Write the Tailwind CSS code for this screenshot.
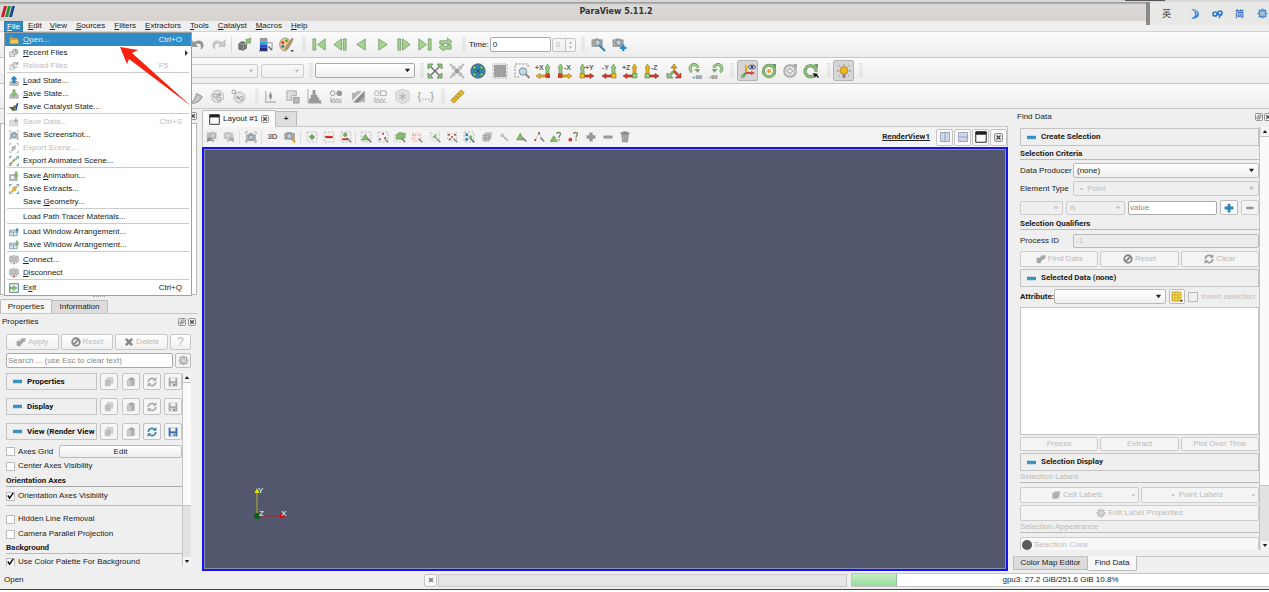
<!DOCTYPE html>
<html lang="en">

<head>
  <meta charset="UTF-8">
  <meta name="viewport" content="width=device-width, initial-scale=1.0">
  <title>ParaView 5.11.2</title>
  <script src="https://cdn.jsdelivr.net/npm/@tailwindcss/browser@4"></script>
</head>

<body class="bg-[#efefef] font-['Liberation_Sans',Arial,sans-serif] text-[8px] leading-[10px] text-[#222]">
  <!-- icon sprite -->
  <svg class="hidden" aria-hidden="true">
    <symbol id="undo" viewBox="0 0 16 16"><path d="M1 3v7h7L6 8c3-3 7-1 6 5 5-6 0-12-8-7z" fill="#999" stroke="#777" stroke-width=".6"/></symbol>
    <symbol id="redo" viewBox="0 0 16 16"><path d="M15 3v7H8l2-2C7 5 3 7 4 13-1 7 4 1 12 6z" fill="#ccc" stroke="#aaa" stroke-width=".6"/></symbol>
    <symbol id="extract" viewBox="0 0 16 16"><path d="M2 7l3-2 5 1v6l-3 2-5-1z" fill="#777" stroke="#666"/><path d="M2 7l5 1v6M7 8l3-2" stroke="#aaa" fill="none" stroke-width=".7"/><path d="M7 7l4-3-2-1 6-2-1 6-2-1-3 3z" fill="#93c47d" stroke="#5b8a4a" stroke-width=".6"/></symbol>
    <symbol id="cmap" viewBox="0 0 16 16"><path d="M2 1h8v4H2z" fill="#999"/><path d="M2 5h8v3H2z" fill="#2aa9d8"/><path d="M2 8h8v3H2z" fill="#2a50c8"/><path d="M2 11h8v4H2z" fill="#252a80"/><path d="M10 6h5v7M1 15h10" stroke="#666" fill="none" stroke-dasharray="1.5 1"/><path d="M11 10l4 4" stroke="#555" stroke-width="1.500"/></symbol>
    <symbol id="palette" viewBox="0 0 16 16"><path d="M7 1C2 1 0 6 1 10c1 4 5 6 7 4 1-2-1-3 1-5 3 0 4-2 3-4-1-2-3-4-5-4z" fill="#efc68c" stroke="#777" stroke-width=".7"/><circle cx="4" cy="6" r="1.500" fill="#d33"/><circle cx="8" cy="4" r="1.400" fill="#3a3"/><circle cx="4" cy="10" r="1.500" fill="#27b"/><path d="M14 1L8 10l-1 4 3-2 5-9z" fill="#b8a070" stroke="#665" stroke-width=".6"/><path d="M12 14h4l-2 2z" fill="#222"/></symbol>
    <symbol id="first" viewBox="0 0 16 16"><path d="M1 2h3v12H1zM14 2v12L6 8z" fill="#a3d58f" stroke="#6c8f60" stroke-width=".8"/></symbol>
    <symbol id="prev" viewBox="0 0 16 16"><path d="M9 2v12L1 8zM11 2h3v12h-3z" fill="#a3d58f" stroke="#6c8f60" stroke-width=".8"/></symbol>
    <symbol id="back" viewBox="0 0 16 16"><path d="M12 2v12L3 8z" fill="#a3d58f" stroke="#6c8f60" stroke-width=".8"/></symbol>
    <symbol id="play" viewBox="0 0 16 16"><path d="M4 2v12l9-6z" fill="#a3d58f" stroke="#6c8f60" stroke-width=".8"/></symbol>
    <symbol id="next" viewBox="0 0 16 16"><path d="M7 2v12l8-6zM2 2h3v12H2z" fill="#a3d58f" stroke="#6c8f60" stroke-width=".8"/></symbol>
    <symbol id="last" viewBox="0 0 16 16"><path d="M12 2h3v12h-3zM2 2v12l8-6z" fill="#a3d58f" stroke="#6c8f60" stroke-width=".8"/></symbol>
    <symbol id="loop" viewBox="0 0 16 16"><path d="M2 8V4h8V1l5 4-5 4V7H5v1zM14 8v5H6v2l-5-4 5-3v2h5V8z" fill="#a3d58f" stroke="#6c8f60" stroke-width=".7"/></symbol>
    <symbol id="camlink" viewBox="0 0 16 16"><path d="M1 3h2l1-1h4l1 1h3v7H1z" fill="#aaa" stroke="#888" stroke-width=".7"/><circle cx="7" cy="6" r="3" fill="#b5d2ea" stroke="#777"/><path d="M9 9l6 6" stroke="#2b87c0" stroke-width="2.200"/></symbol>
    <symbol id="camplus" viewBox="0 0 16 16"><path d="M1 3h2l1-1h4l1 1h3v7H1z" fill="#aaa" stroke="#888" stroke-width=".7"/><circle cx="7" cy="6" r="3" fill="#b5d2ea" stroke="#777"/><path d="M12 8v7M8.500 11.500h7" stroke="#2b87c0" stroke-width="2.400"/></symbol>
    <symbol id="camfind" viewBox="0 0 16 16"><path d="M1 3h2l1-1h6l1 1h3v8H1z" fill="#aaa" stroke="#888" stroke-width=".7"/><circle cx="7" cy="7" r="3.500" fill="#b5d2ea" stroke="#777"/><path d="M10 10l5 5" stroke="#c99a2a" stroke-width="2.400"/></symbol>
    <symbol id="resetcam" viewBox="0 0 16 16"><path d="M3 3l10 10M13 3L3 13" stroke="#666" stroke-width="1.300"/><path d="M1 1h5L1 6zM15 1h-5l5 5zM1 15h5l-5-5zM15 15h-5l5-5z" fill="#93cf7d" stroke="#4b7540" stroke-width=".7"/></symbol>
    <symbol id="resetdata" viewBox="0 0 16 16"><path d="M1 1l4 4M15 1l-4 4M1 15l4-4M15 15l-4-4" stroke="#bbb" stroke-width="2"/><path d="M6 3v3H3zM10 3v3h3zM6 13v-3H3zM10 13v-3h3z" fill="#ccc" stroke="#aaa" stroke-width=".7"/><circle cx="8" cy="8" r="2.500" fill="#999"/></symbol>
    <symbol id="globe" viewBox="0 0 16 16"><circle cx="8" cy="8" r="7.200" fill="#2d89bd" stroke="#555" stroke-width=".8"/><path d="M4 4l8 8M12 4l-8 8" stroke="#444"/><g fill="#93cf7d" stroke="#365" stroke-width=".8"><circle cx="4.500" cy="4.500" r="1.700"/><circle cx="11.500" cy="4.500" r="1.700"/><circle cx="4.500" cy="11.500" r="1.700"/><circle cx="11.500" cy="11.500" r="1.700"/></g></symbol>
    <symbol id="greybox" viewBox="0 0 16 16"><path d="M2 2h12v12H2z" fill="#a0a0a0"/><path d="M1 1h14v14H1z" fill="none" stroke="#aaa" stroke-dasharray="2 1.5"/></symbol>
    <symbol id="zoombox" viewBox="0 0 16 16"><path d="M14 4V1H1v13h4" fill="none" stroke="#888" stroke-dasharray="2 1.5"/><circle cx="9" cy="8.500" r="3.700" fill="#b9dcf2" stroke="#888"/><path d="M11.500 11l4 4" stroke="#888" stroke-width="2"/></symbol>
    <symbol id="iso" viewBox="0 0 16 16"><path d="M8 9V4" stroke="#d9a520" stroke-width="2"/><path d="M5 5l3-4 3 4z" fill="#e6b018" stroke="#75601c" stroke-width=".6"/><path d="M8 8l-4 4" stroke="#7db56b" stroke-width="3"/><path d="M8 8l4 4" stroke="#c9503f" stroke-width="3"/><path d="M1 10v5h6z" fill="#93cf7d" stroke="#557d4a" stroke-width=".7"/><path d="M15 10v5H9z" fill="#d54535" stroke="#773322" stroke-width=".5"/></symbol>
    <symbol id="rotp" viewBox="0 0 16 16"><path d="M5 9A4 4 0 1 1 11 5" fill="none" stroke="#6b8f60" stroke-width="3"/><path d="M5 9A4 4 0 1 1 11 5" fill="none" stroke="#a3d58f" stroke-width="1.600"/><path d="M7 6h6l-2 4z" fill="#79a96a"/><text x="5" y="16" font-size="6" font-weight="bold" fill="#777">+90</text></symbol>
    <symbol id="rotm" viewBox="0 0 16 16"><path d="M11 9A4 4 0 1 0 5 5" fill="none" stroke="#6b8f60" stroke-width="3"/><path d="M11 9A4 4 0 1 0 5 5" fill="none" stroke="#a3d58f" stroke-width="1.600"/><path d="M9 6H3l2 4z" fill="#79a96a"/><text x="0" y="16" font-size="6" font-weight="bold" fill="#777">-90</text></symbol>
    <symbol id="showaxes" viewBox="0 0 16 16"><path d="M6 11V4" stroke="#d9a520" stroke-width="2"/><path d="M4 5l2-4 2 4z" fill="#e6b018"/><path d="M6 10h6" stroke="#d54535" stroke-width="2"/><path d="M11 8l4 2-4 2z" fill="#d54535"/><path d="M6 10l-3 3" stroke="#6a9a5a" stroke-width="2.500"/><path d="M1 11v4h4z" fill="#7db56b"/><ellipse cx="12" cy="4" rx="3.500" ry="2" fill="#dde" stroke="#556"/><circle cx="12" cy="4" r="1.300" fill="#336"/></symbol>
    <symbol id="center" viewBox="0 0 16 16"><circle cx="8" cy="8" r="5.700" fill="none" stroke="#557d4a" stroke-width="3"/><circle cx="8" cy="8" r="5.700" fill="none" stroke="#93c47d" stroke-width="1.900"/><circle cx="8" cy="8" r="2" fill="#eba41c"/><path d="M11 1h4v5z" fill="#6b985c"/></symbol>
    <symbol id="centeroff" viewBox="0 0 16 16"><circle cx="8" cy="8" r="5.700" fill="none" stroke="#b4b4b4" stroke-width="2.500"/><path d="M8 5l3 3-3 3-3-3z" fill="none" stroke="#b4b4b4" stroke-width="1.500"/><path d="M11 1h4v5z" fill="#aaa"/></symbol>
    <symbol id="pick" viewBox="0 0 16 16"><path d="M11 12.500A5.500 5.500 0 1 1 13 9" fill="none" stroke="#557d4a" stroke-width="3"/><path d="M11 12.500A5.500 5.500 0 1 1 13 9" fill="none" stroke="#93c47d" stroke-width="1.800"/><path d="M11 1h4v5z" fill="#6b985c"/><path d="M10 10l5 1-1 1 2 2-1 1-2-2-1 2z" fill="#111"/></symbol>
    <symbol id="bulb" viewBox="0 0 16 16"><circle cx="8" cy="7.500" r="4" fill="#efb520" stroke="#977418" stroke-width=".6"/><path d="M6.500 11h3v4h-3z" fill="#888"/><path d="M8 1v1.500M2.500 2l1.500 1.500M13.500 2L12 3.500M1 8h2M13 8h2M3 13l1-1M13 13l-1-1" stroke="#888"/></symbol>
    <symbol id="tube" viewBox="0 0 16 16"><path d="M1 14c4 0 5-3 7-9l6 3c-2 5-6 8-13 7z" fill="#c4c4c4" stroke="#888"/></symbol>
    <symbol id="glyphs" viewBox="0 0 16 16"><circle cx="8" cy="8" r="6.500" fill="#e4e4e4" stroke="#b4b4b4"/><circle cx="5.500" cy="7" r="2" fill="none" stroke="#999"/><circle cx="10" cy="6" r="1.800" fill="#aaa"/><circle cx="9.500" cy="10.500" r="2" fill="none" stroke="#999"/></symbol>
    <symbol id="glyphs2" viewBox="0 0 16 16"><circle cx="9" cy="9" r="5.800" fill="#e4e4e4" stroke="#b4b4b4"/><circle cx="3" cy="3" r="2" fill="none" stroke="#999"/><circle cx="7" cy="9" r="1.600" fill="#aaa"/><circle cx="11" cy="10" r="2" fill="none" stroke="#999"/></symbol>
    <symbol id="plotpt" viewBox="0 0 16 16"><path d="M3 2v12h11M8 12V3" fill="none" stroke="#aaa" stroke-width="1.200"/><ellipse cx="8" cy="7.500" rx="1.800" ry="3" fill="#999"/></symbol>
    <symbol id="plotsel" viewBox="0 0 16 16"><path d="M2 2h10v5H7v5H2z" fill="#ddd" stroke="#aaa"/><path d="M9 9h6v6H9z" fill="#bbb" stroke="#999"/></symbol>
    <symbol id="hist" viewBox="0 0 16 16"><path d="M1 0v15h15" fill="none" stroke="#aaa"/><path d="M2 10h2v5H2zM4 6h2v9H4zM6 1h3v14H6zM9 6h2v9H9zM11 9h2v6h-2zM13 12h2v3h-2z" fill="#999"/></symbol>
    <symbol id="plottime" viewBox="0 0 16 16"><circle cx="4" cy="4.500" r="2.500" fill="none" stroke="#999"/><circle cx="11" cy="4.500" r="3" fill="#999"/><path d="M2 9v5h12M3 13l2-3 2 3 2-3 2 3 2-3" fill="none" stroke="#999"/></symbol>
    <symbol id="slice" viewBox="0 0 16 16"><path d="M1 4h4l1-2h9v12H1z" fill="#b4b4b4"/><path d="M0 15L14 1" stroke="#eee" stroke-width="2"/><path d="M3 14L14 3v5l-7 7z" fill="#8c8c8c"/></symbol>
    <symbol id="plottime2" viewBox="0 0 16 16"><circle cx="4" cy="4.500" r="2.500" fill="none" stroke="#aaa"/><path d="M8 2h6v5H8zM2 9v5h12M3 13l2-3 2 3 2-3 2 3 2-3" fill="none" stroke="#aaa"/></symbol>
    <symbol id="cubestar" viewBox="0 0 16 16"><path d="M8 0l7 3v9l-7 4-7-4V3z" fill="#e0e0e0" stroke="#ccc"/><path d="M8 4v8M4.500 6l7 4M11.500 6l-7 4" stroke="#aaa"/></symbol>
    <symbol id="ruler" viewBox="0 0 16 16"><path d="M1 12L12 1l3 3L4 15z" fill="#f0b914" stroke="#8a702a" stroke-width=".8"/><path d="M4 10l1.500 1.500M6.500 7.500L8 9M9 5l1.500 1.500" stroke="#886655"/></symbol>
    <symbol id="camgrey" viewBox="0 0 16 16"><path d="M1 2h13v9H1z" fill="#c0c0c0"/><circle cx="9" cy="6" r="4" fill="#ccc" stroke="#999"/><path d="M1 15l1-6 6 0-2 2c3 0 5 1 5 4-2-2-4-2-6-2z" fill="#8c8c8c"/></symbol>
    <symbol id="camgrey2" viewBox="0 0 16 16"><path d="M1 2h13v9H1z" fill="#ccc"/><circle cx="7" cy="6" r="4" fill="#d4d4d4" stroke="#aaa"/><path d="M15 15l-1-6-6 0 2 2c-3 0-5 1-5 4 2-2 4-2 6-2z" fill="#aaa"/></symbol>
    <symbol id="shot" viewBox="0 0 16 16"><path d="M1 4V1h3M12 1h3v3M1 12v3h3M12 15h3v-3" fill="none" stroke="#999"/><path d="M2 5h3l1-2h4l1 2h3v8H2z" fill="#b4b4b4" stroke="#888" stroke-width=".6"/><circle cx="8" cy="8.500" r="3.200" fill="#b5d2ea" stroke="#777"/></symbol>
    <symbol id="selbox" viewBox="0 0 16 16"><path d="M1.500 1.500h13v13h-13z" fill="none" stroke="#aaa" stroke-dasharray="3 2"/></symbol>
    <symbol id="selplus" viewBox="0 0 16 16"><use href="#selbox"/><path d="M8 4.500v7M4.500 8h7" stroke="#6fa85d" stroke-width="3.500"/></symbol>
    <symbol id="selminus" viewBox="0 0 16 16"><use href="#selbox"/><path d="M3 8h10" stroke="#d22b20" stroke-width="3"/></symbol>
    <symbol id="seltog" viewBox="0 0 16 16"><use href="#selbox"/><path d="M7 2v6M4 5h6" stroke="#6fa85d" stroke-width="2.500"/><path d="M3 11h8" stroke="#d22b20" stroke-width="2.500"/><path d="M9 9l6 6" stroke="#777" stroke-width="1.500"/></symbol>
    <symbol id="seltri" viewBox="0 0 16 16"><use href="#selbox"/><path d="M7 4l5 8H2z" fill="#82bd6c" stroke="#557d4a" stroke-width=".6"/><path d="M10 10l5 5" stroke="#777" stroke-width="1.800"/></symbol>
    <symbol id="selpts" viewBox="0 0 16 16"><use href="#selbox"/><g fill="#c0392b"><circle cx="8" cy="4" r="1.300"/><circle cx="4" cy="11" r="1.300"/><circle cx="11" cy="9" r="1.300"/></g><path d="M10 10l5 5" stroke="#888" stroke-width="1.800"/></symbol>
    <symbol id="selblock" viewBox="0 0 16 16"><path d="M3 5l4-3 8 1v6l-4 2H3z" fill="#82bd6c" stroke="#557d4a" stroke-width=".6"/><path d="M1 4v10h9" fill="none" stroke="#aaa" stroke-dasharray="2 2"/><path d="M10 10l5 5" stroke="#777" stroke-width="1.800"/></symbol>
    <symbol id="selfrus" viewBox="0 0 16 16"><path d="M2 4l8-2 3 3v7L5 14l-3-3zM5 5v9M2 4l3 2 8-1" fill="none" stroke="#dd7c70" stroke-dasharray="2 2"/><path d="M10 10l5 5" stroke="#888" stroke-width="1.800"/></symbol>
    <symbol id="selpoly" viewBox="0 0 16 16"><path d="M2 2l6 3 6-3v10l-6 2-6-3z" fill="none" stroke="#aaa" stroke-dasharray="2 2"/><path d="M4 8l6-4v7z" fill="#82bd6c"/><path d="M10 10l5 5" stroke="#888" stroke-width="1.800"/></symbol>
    <symbol id="selpolypts" viewBox="0 0 16 16"><path d="M2 2l6 2 6-2v10l-6 2-6-3z" fill="none" stroke="#aaa" stroke-dasharray="2 2"/><g fill="#c0594b"><circle cx="4" cy="5" r="1.500"/><circle cx="8" cy="8" r="1.500"/><circle cx="12" cy="5" r="1.500"/><circle cx="5" cy="11" r="1.500"/></g><path d="M10 10l5 5" stroke="#888" stroke-width="1.800"/></symbol>
    <symbol id="selinter" viewBox="0 0 16 16"><use href="#selbox"/><circle cx="5" cy="5" r="2" fill="#2b87c0"/><circle cx="5" cy="11" r="2" fill="#2b87c0"/><circle cx="10" cy="8" r="2.500" fill="#82bd6c"/><path d="M10 10l5 5" stroke="#666" stroke-width="2"/></symbol>
    <symbol id="greycube" viewBox="0 0 16 16"><path d="M2 6l4-4h8v8l-4 4H2z" fill="#bbb"/><path d="M2 6h8v8M10 6l4-4M6 6v8M2 10h8l4-4" fill="none" stroke="#999" stroke-width=".8"/></symbol>
    <symbol id="hoverpt" viewBox="0 0 16 16"><circle cx="6" cy="6" r="2" fill="#ccc" stroke="#aaa"/><path d="M8 8l5 5" stroke="#aaa" stroke-width="1.800"/></symbol>
    <symbol id="hovertri" viewBox="0 0 16 16"><path d="M7 3l5 9H2z" fill="#82bd6c" stroke="#557d4a" stroke-width=".6"/><path d="M10 9l5 5" stroke="#777" stroke-width="1.800"/></symbol>
    <symbol id="hoverpts" viewBox="0 0 16 16"><path d="M8 3L3 12M8 3l4 8" stroke="#999" stroke-dasharray="2 1"/><g fill="#c0392b"><circle cx="8" cy="3" r="1.500"/><circle cx="3" cy="12" r="1.500"/></g><path d="M10 9l5 5" stroke="#777" stroke-width="1.800"/></symbol>
    <symbol id="asktri" viewBox="0 0 16 16"><path d="M5 6l5 8H0z" fill="#82bd6c" stroke="#557d4a" stroke-width=".6"/><path d="M9 4c0-3 5-3 5 0 0 2-2 2-2 5M12 10.500v2" fill="none" stroke="#6b7b55" stroke-width="1.600"/></symbol>
    <symbol id="askpt" viewBox="0 0 16 16"><circle cx="4.500" cy="11.500" r="2.600" fill="#c8402f"/><path d="M9 4c0-3 5-3 5 0 0 2-2 2-2 5M12 10.500v2" fill="none" stroke="#6b7b55" stroke-width="1.600"/></symbol>
    <symbol id="gplus" viewBox="0 0 16 16"><path d="M8 2v12M2 8h12" stroke="#999" stroke-width="4.500"/></symbol>
    <symbol id="gminus" viewBox="0 0 16 16"><path d="M2 8h12" stroke="#999" stroke-width="4"/></symbol>
    <symbol id="bplus" viewBox="0 0 16 16"><path d="M8 1v14M1 8h14" stroke="#2b87b8" stroke-width="4.500"/></symbol>
    <symbol id="trash" viewBox="0 0 16 16"><path d="M2 3h12M5 1.500h6" stroke="#888" stroke-width="2"/><path d="M3 4h10l-1 11H4z" fill="#999"/><path d="M6 6v7M8 6v7M10 6v7" stroke="#bbb" stroke-width=".8"/></symbol>
    <symbol id="folder" viewBox="0 0 16 16"><path d="M1 3h5l1 2h7v9H1z" fill="#d79a2a"/><path d="M3 7h12v7H1z" fill="#f3c75a" stroke="#b98729" stroke-width=".6"/></symbol>
    <symbol id="recent" viewBox="0 0 16 16"><path d="M1 6h8v8H1z" fill="#ddd" stroke="#999"/><circle cx="10" cy="6" r="4.500" fill="#cfd8c8" stroke="#888"/><path d="M10 3v3l3 1" fill="none" stroke="#668a55" stroke-width="1.200"/></symbol>
    <symbol id="reload" viewBox="0 0 16 16"><path d="M1 6h8v8H1z" fill="#e4e4e4" stroke="#bbb"/><path d="M13 9a4 4 0 1 1 0-5M14 1v4h-4" fill="none" stroke="#aaa" stroke-width="1.800"/></symbol>
    <symbol id="load" viewBox="0 0 16 16"><path d="M1 10l2-2h10l2 2v5H1z" fill="#bbb" stroke="#999" stroke-width=".6"/><path d="M8 0l5 5h-3v6H6V5H3z" fill="#2b87c0" stroke="#25638b" stroke-width=".5"/></symbol>
    <symbol id="save" viewBox="0 0 16 16"><path d="M1 10l2-2h10l2 2v5H1z" fill="#bbb" stroke="#999" stroke-width=".6"/><path d="M8 12l5-5h-3V1H6v6H3z" fill="#86bf70" stroke="#557d4a" stroke-width=".5"/></symbol>
    <symbol id="catalyst" viewBox="0 0 16 16"><path d="M0 8h7v7z" fill="#555"/><path d="M7 6h3L8 14H6z" fill="#d02a2a"/><path d="M9 5h3l-2 9H8z" fill="#3a9a3a"/><path d="M12 2h3l-3 12h-2z" fill="#2450a0"/></symbol>
    <symbol id="savedata" viewBox="0 0 16 16"><path d="M1 5h13v9H1z" fill="#ddd" stroke="#bbb"/><path d="M11 1v6M8 5l3 3 3-3" fill="none" stroke="#aaa" stroke-width="2"/></symbol>
    <symbol id="export" viewBox="0 0 16 16"><path d="M1 4V1h3M12 1h3v3M1 12v3h3M12 15h3v-3" fill="none" stroke="#bbb" stroke-width="1.500"/><path d="M3 13l2-5-2-1 8-4-1 8-2-1-2 3z" fill="#b0b0b0"/></symbol>
    <symbol id="exportanim" viewBox="0 0 16 16"><path d="M1 4V1h3M12 1h3v3M1 12v3h3M12 15h3v-3" fill="none" stroke="#2b87a0" stroke-width="1.500"/><path d="M2 13l3-3M6 9l4-4M11 5l2-2" stroke="#7a9c50" stroke-width="3"/><path d="M2 13L13 3" stroke="#c7d06a" stroke-dasharray="2 2"/></symbol>
    <symbol id="saveanim" viewBox="0 0 16 16"><path d="M1 6h12v9H1z" fill="#bbb" stroke="#888"/><path d="M3 8h5v5H3z" fill="#eee"/><path d="M10 1h3v5h2l-3.500 4L8 6h2z" fill="#86bf70" stroke="#777" stroke-width=".5"/></symbol>
    <symbol id="saveext" viewBox="0 0 16 16"><path d="M1 4V1h3M12 1h3v3M1 12v3h3M12 15h3v-3" fill="none" stroke="#2b87c0" stroke-width="1.500"/><path d="M3 12l4-4-2-2 8-3-3 8-2-1-3 4z" fill="#eeb51f" stroke="#a57b1c" stroke-width=".6"/></symbol>
    <symbol id="loadwin" viewBox="0 0 16 16"><path d="M1 5h12v9H1zM1 8h12M7 8v6" fill="#dbe9ee" stroke="#4f7f90"/><path d="M13 1l3 4h-2v4h-2V5h-2z" fill="#2b87c0"/></symbol>
    <symbol id="savewin" viewBox="0 0 16 16"><path d="M1 5h12v9H1zM1 8h12M7 8v6" fill="#dbe9ee" stroke="#4f7f90"/><path d="M13 9l3-4h-2V1h-2v4h-2z" fill="#86bf70" stroke="#557d4a" stroke-width=".5"/></symbol>
    <symbol id="connect" viewBox="0 0 16 16"><path d="M1 3c0-2 4-2 4 0v7c0 2-4 2-4 0zM6 2c0-2 4-2 4 0v8c0 2-4 2-4 0zM11 3c0-2 4-2 4 0v7c0 2-4 2-4 0z" fill="#ccc" stroke="#999"/><path d="M3 13h10" stroke="#999"/><circle cx="8" cy="13.500" r="1.700" fill="#86bf70"/></symbol>
    <symbol id="disconnect" viewBox="0 0 16 16"><path d="M1 3c0-2 4-2 4 0v7c0 2-4 2-4 0zM6 2c0-2 4-2 4 0v8c0 2-4 2-4 0zM11 3c0-2 4-2 4 0v7c0 2-4 2-4 0z" fill="#ccc" stroke="#999"/><path d="M3 13h10" stroke="#999"/><circle cx="8" cy="13.500" r="1.700" fill="#d44"/></symbol>
    <symbol id="exit" viewBox="0 0 16 16"><path d="M1 6V1h14v14H1v-5" fill="#e8f0f0" stroke="#557f90" stroke-width="1.500"/><path d="M0 6.500h7V4l6 4-6 4V9.500H0z" fill="#86bf70" stroke="#557d4a" stroke-width=".5"/></symbol>
    <symbol id="apply" viewBox="0 0 16 16"><path d="M1 6h8v4l-2 5-6-1z" fill="#a4a4a4"/><circle cx="9" cy="5" r="2.500" fill="#b4b4b4"/><path d="M7 8l4-4-2-2h6v6l-2-1-4 4z" fill="#a4a4a4"/></symbol>
    <symbol id="noentry" viewBox="0 0 16 16"><circle cx="8" cy="8" r="6" fill="none" stroke="#888" stroke-width="3"/><path d="M4 12l8-8" stroke="#888" stroke-width="3"/></symbol>
    <symbol id="cross" viewBox="0 0 16 16"><path d="M3 3l10 10M13 3L3 13" stroke="#888" stroke-width="4.500"/></symbol>
    <symbol id="gear" viewBox="0 0 16 16"><path d="M8 1v14M1 8h14M3 3l10 10M13 3L3 13" stroke="currentColor" stroke-width="3"/><circle cx="8" cy="8" r="5.500" fill="currentColor"/><circle cx="8" cy="8" r="4" fill="#eee"/><circle cx="8" cy="8" r="2.500" fill="none" stroke="currentColor" stroke-width="1.500"/></symbol>
    <symbol id="copy" viewBox="0 0 16 16"><path d="M5 1h9v9H5z" fill="#d4d4d4" stroke="#bbb"/><path d="M2 5h8v9H2z" fill="#ccc" stroke="#aaa"/><path d="M4 8h4M4 11h4" stroke="#999"/></symbol>
    <symbol id="paste" viewBox="0 0 16 16"><path d="M4 2h10v12H4z" fill="#b0b0b0"/><path d="M7 1h4v2H7z" fill="#888"/><path d="M2 5h7v9H2z" fill="#ccc" stroke="#aaa"/></symbol>
    <symbol id="refresh" viewBox="0 0 16 16"><path d="M2 8a6 6 0 0 1 11-3M14 8a6 6 0 0 1-11 3" fill="none" stroke="currentColor" stroke-width="2.600"/><path d="M9 6h6V0zM7 10H1v6z" fill="currentColor"/></symbol>
    <symbol id="disk" viewBox="0 0 16 16"><path d="M1 1h14v14H1z" fill="currentColor"/><path d="M4 1h8v6H4z" fill="#eee"/><path d="M4 10h8v5H4z" fill="#ddd"/><path d="M9 11h2v3H9z" fill="#555"/></symbol>
    <symbol id="dash" viewBox="0 0 16 16"><path d="M0 5h16v6H0z" fill="#2e8bc0"/><path d="M1 9h14" stroke="#74b3da"/></symbol>
    <symbol id="down" viewBox="0 0 8 8"><path d="M1 2h6L4 6z" fill="currentColor"/></symbol>
    <symbol id="up" viewBox="0 0 8 8"><path d="M1 6h6L4 2z" fill="currentColor"/></symbol>
    <symbol id="float" viewBox="0 0 16 16"><rect x="1" y="1" width="14" height="14" rx="2" fill="#eee" stroke="#777" stroke-width="1.500"/><path d="M4 8h5v4H4zM7 8V4h5v5H9" fill="none" stroke="#666" stroke-width="1.300"/></symbol>
    <symbol id="close" viewBox="0 0 16 16"><rect x="1" y="1" width="14" height="14" rx="2" fill="#eee" stroke="#777" stroke-width="1.500"/><path d="M4.500 4.500l7 7M11.500 4.500l-7 7" stroke="#444" stroke-width="2.200"/></symbol>
    <symbol id="win" viewBox="0 0 16 16"><path d="M1 1h14v14H1z" fill="#fafafa" stroke="#222" stroke-width="1.300"/><path d="M1 1h14v4H1z" fill="#222"/></symbol>
    <symbol id="grip" viewBox="0 0 4 16"><path d="M1 0v16M3 0v16" stroke="#c4c4c4" stroke-dasharray="1 1"/></symbol>
    <symbol id="check" viewBox="0 0 10 10"><path d="M2 5l2 3 4-6" fill="none" stroke="#111" stroke-width="1.600"/></symbol>
  </svg>

  <div class="flex h-screen flex-col overflow-hidden">
    <!-- title bar -->
    <header class="relative flex h-[21px] shrink-0 items-center border-t-2 border-[#d8d8d8] bg-linear-to-b from-[#8f8f8d] via-[#dcdad8] via-15% to-[#d6d2d0]">
      <svg class="ml-[1px] h-[11px] w-[14px]" viewBox="0 0 14 11"><path d="M3 0h3L3 11H0z" fill="#c4202c"/><path d="M7 0h3L7 11H4z" fill="#2c8f3f"/><path d="M11 0h3l-3 11H8z" fill="#1b4a94"/></svg>
      <h1 class="flex-1 text-center font-['DejaVu_Sans',sans-serif] font-bold text-[#333] -indent-[52px]">ParaView 5.11.2</h1>
      <div class="absolute -top-0.5 right-[104px] h-[1px] w-[40px] bg-[#555]"></div>
      <div class="absolute top-0 right-0 flex h-[23px] w-[123px] items-center border-l-4 border-[#8a8a8a] bg-[#e8e8e6] pl-3 text-[9px] text-[#333]">
        <span class="w-[28px] font-['Noto_Sans_CJK_SC',sans-serif]">英</span>
        <svg class="mr-3 h-[10px] w-[10px]" viewBox="0 0 10 10"><path d="M1 0c5 0 8 2 8 5s-3 5-8 5c3-2 4-3 4-5S4 2 1 0z" fill="#3d86dc"/><path d="M4 1c3 1 4 3 2 5" stroke="#bde" fill="none"/></svg>
        <svg class="mr-3 h-[10px] w-[11px]" viewBox="0 0 11 10"><circle cx="3" cy="5" r="2" fill="none" stroke="#2f78cc" stroke-width="1.700"/><circle cx="8" cy="4" r="2" fill="none" stroke="#2f78cc" stroke-width="1.700"/><path d="M9 5L7 9" stroke="#2f78cc" stroke-width="1.500"/></svg>
        <span class="w-[22px] font-['Noto_Sans_CJK_SC',sans-serif] font-bold text-[#2f78cc]">简</span>
        <svg class="h-[11px] w-[11px] shrink-0 text-[#3d86cc]"><use href="#gear"/></svg>
      </div>
    </header>

    <!-- menu bar -->
    <nav class="relative z-20 flex h-[11px] shrink-0 items-center border-b border-[#d4d4d4] pl-[4px]">
      <button class="h-[11px] border border-[#2b7cb5] bg-[#308cc6] px-[2px] leading-[9px] text-white"><u>F</u>ile</button>
      <button class="pr-[4px] pl-[5px]"><u>E</u>dit</button>
      <button class="px-[4px]"><u>V</u>iew</button>
      <button class="px-[5px]"><u>S</u>ources</button>
      <button class="px-[4px]"><u>F</u>ilters</button>
      <button class="px-[5px]"><u>E</u>xtractors</button>
      <button class="px-[4px]"><u>T</u>ools</button>
      <button class="px-[5px]"><u>C</u>atalyst</button>
      <button class="px-[4px]"><u>M</u>acros</button>
      <button class="px-[5px]"><u>H</u>elp</button>

      <!-- open File menu -->
      <div class="absolute top-[11px] left-[4px] w-[188px] border border-[#a0a0a0] bg-white pb-px [&>button]:flex [&>button]:h-[13px] [&>button]:w-full [&>button]:items-center [&>button]:gap-[4px] [&>button]:pr-[9px] [&>button]:pl-[4px] [&_svg]:size-[10px] [&>hr]:mx-[2px] [&>hr]:mb-px [&>hr]:border-[#ccc]">
        <button class="bg-[#308cc6] text-[#e4f1fa]"><svg><use href="#folder"/></svg><span><u>O</u>pen...</span><span class="ml-auto">Ctrl+O</span></button>
        <button><svg><use href="#recent"/></svg><span><u>R</u>ecent Files</span><span class="ml-auto h-[6px] w-0 translate-x-[6px] border-y-3 border-l-3 border-y-transparent border-l-[#333]"></span></button>
        <button disabled class="text-[#bebebe]"><svg><use href="#reload"/></svg><span>Reload Files</span><span class="ml-auto pr-[14px]">F5</span></button>
        <hr>
        <button><svg><use href="#load"/></svg><span><u>L</u>oad State...</span></button>
        <button><svg><use href="#save"/></svg><span><u>S</u>ave State...</span></button>
        <button><svg><use href="#catalyst"/></svg><span>Save Catalyst State...</span></button>
        <hr>
        <button disabled class="text-[#bebebe]"><svg><use href="#savedata"/></svg><span>Save Data...</span><span class="ml-auto">Ctrl+S</span></button>
        <button><svg><use href="#shot"/></svg><span>Save Screenshot...</span></button>
        <button disabled class="text-[#bebebe]"><svg><use href="#export"/></svg><span>Export Scene...</span></button>
        <button><svg><use href="#exportanim"/></svg><span>Export Animated Scene...</span></button>
        <hr>
        <button><svg><use href="#saveanim"/></svg><span>Save <u>A</u>nimation...</span></button>
        <button><svg><use href="#saveext"/></svg><span>Save Extracts...</span></button>
        <button><svg></svg><span>Save <u>G</u>eometry...</span></button>
        <hr>
        <button><svg></svg><span>Load Path Tracer Materials...</span></button>
        <hr>
        <button><svg><use href="#loadwin"/></svg><span>Load Window Arrangement...</span></button>
        <button><svg><use href="#savewin"/></svg><span>Save Window Arrangement...</span></button>
        <hr>
        <button><svg><use href="#connect"/></svg><span><u>C</u>onnect...</span></button>
        <button><svg><use href="#disconnect"/></svg><span><u>D</u>isconnect</span></button>
        <hr>
        <button><svg><use href="#exit"/></svg><span>E<u>x</u>it</span><span class="ml-auto">Ctrl+Q</span></button>
        <!-- arrow pointing at Open -->
        <svg class="pointer-events-none absolute top-[14px] left-[115px] h-[60px]! w-[72px]!" viewBox="0 0 72 60"><path d="M0 0l18 3-6 3 59 53L9 12 7 17z" fill="#f8220f"/></svg>
      </div>
    </nav>

    <!-- main toolbars -->
    <div class="flex h-[26px] shrink-0 items-center border-b border-[#c6c6c6] bg-linear-to-b from-[#fbfbfb] to-[#ededed] pl-[187px] [&>button]:flex [&>button]:w-[21px] [&>button]:justify-center [&>button>svg]:size-[15px]">
      <button aria-label="Undo"><svg><use href="#undo"/></svg></button>
      <button aria-label="Redo"><svg><use href="#redo"/></svg></button>
      <span class="mx-[2px] h-[16px] w-px bg-[#d8d8d8]"></span>
      <button aria-label="Extract"><svg><use href="#extract"/></svg></button>
      <button aria-label="Color map"><svg><use href="#cmap"/></svg></button>
      <button aria-label="Palette"><svg><use href="#palette"/></svg></button>
      <svg class="mr-[3px] ml-[5px] h-[15px] w-[4px]"><use href="#grip"/></svg>
      <button aria-label="First frame"><svg><use href="#first"/></svg></button>
      <button aria-label="Previous frame"><svg><use href="#prev"/></svg></button>
      <button aria-label="Reverse"><svg><use href="#back"/></svg></button>
      <button aria-label="Play"><svg><use href="#play"/></svg></button>
      <button aria-label="Next frame"><svg><use href="#next"/></svg></button>
      <button aria-label="Last frame"><svg><use href="#last"/></svg></button>
      <button aria-label="Loop"><svg><use href="#loop"/></svg></button>
      <svg class="mr-[3px] ml-[6px] h-[15px] w-[4px]"><use href="#grip"/></svg>
      <label for="time" class="mr-[1px]">Time:</label>
      <input id="time" value="0" class="h-[15px] w-[61px] rounded-xs border border-[#aaa] bg-white px-[2px]">
      <div class="ml-[1px] flex h-[14px] w-[24px] items-center rounded-xs border border-[#c4c4c4] text-[#bbb]">
        <input aria-label="Time step" disabled value="0" class="w-[12px] pl-[3px]">
        <span class="flex h-full flex-1 flex-col items-center justify-center border-l border-[#c4c4c4] bg-[#f6f6f6]"><svg class="size-[5px]"><use href="#up"/></svg><svg class="size-[5px]"><use href="#down"/></svg></span>
      </div>
      <svg class="mr-[3px] ml-[5px] h-[15px] w-[4px]"><use href="#grip"/></svg>
      <button aria-label="Link camera"><svg><use href="#camlink"/></svg></button>
      <button aria-label="Add camera"><svg><use href="#camplus"/></svg></button>
    </div>

    <div class="flex h-[26px] shrink-0 items-center border-b border-[#c6c6c6] bg-linear-to-b from-[#fbfbfb] to-[#ededed] pl-[160px] [&>button]:flex [&>button]:h-[21px] [&>button]:w-[21px] [&>button]:items-center [&>button]:justify-center [&_button>svg]:size-[16px]">
      <div class="relative h-[14px] w-[98px] text-[#bbb]"><select disabled aria-label="Color array" class="h-full w-full appearance-none rounded-xs border border-[#ccc] opacity-100"></select><svg class="absolute top-[4px] right-[4px] size-[6px]"><use href="#down"/></svg></div>
      <div class="relative ml-[3px] h-[14px] w-[43px] text-[#bbb]"><select disabled aria-label="Component" class="h-full w-full appearance-none rounded-xs border border-[#ccc] opacity-100"></select><svg class="absolute top-[4px] right-[4px] size-[6px]"><use href="#down"/></svg></div>
      <svg class="mr-[2px] ml-[5px] h-[15px] w-[4px]"><use href="#grip"/></svg>
      <div class="relative h-[15px] w-[100px]"><select aria-label="Representation" class="h-full w-full appearance-none rounded-xs border border-[#aaa] bg-linear-to-b from-white to-[#f0f0f0]"></select><svg class="absolute top-[4px] right-[4px] size-[7px]"><use href="#down"/></svg></div>
      <svg class="mr-[3px] ml-[5px] h-[15px] w-[4px]"><use href="#grip"/></svg>
      <div class="flex w-[298px] justify-between">
        <button aria-label="Reset camera"><svg><use href="#resetcam"/></svg></button>
        <button aria-label="Zoom to data"><svg><use href="#resetdata"/></svg></button>
        <button aria-label="Reset closest"><svg><use href="#globe"/></svg></button>
        <button aria-label="Zoom closest"><svg><use href="#greybox"/></svg></button>
        <button aria-label="Zoom to box"><svg><use href="#zoombox"/></svg></button>
        <button aria-label="View +X"><svg viewBox="0 0 16 16"><path d="M10 5l2.500-4L15 5h-1v6h-3V5z" fill="#93cf7d" stroke="#557d4a" stroke-width=".6"/><path d="M1 13l4-2.500V12h6v2H5v1.500z" fill="#e9b41c" stroke="#97731c" stroke-width=".6"/><path d="M10.500 10.500H15V15h-4.500z" fill="#d5392a"/><text x="0" y="7" font-size="7" font-weight="bold" fill="#666">+X</text></svg></button>
        <button aria-label="View -X"><svg viewBox="0 0 16 16"><path d="M1 5l2.500-4L6 5H5v6H2V5z" fill="#93cf7d" stroke="#557d4a" stroke-width=".6"/><path d="M15 13l-4-2.500V12H5v2h6v1.500z" fill="#e9b41c" stroke="#97731c" stroke-width=".6"/><path d="M1 10.500h4.500V15H1z" fill="#d5392a"/><text x="7" y="7" font-size="7" font-weight="bold" fill="#666">-X</text></svg></button>
        <button aria-label="View +Y"><svg viewBox="0 0 16 16"><path d="M1 5l2.500-4L6 5H5v6H2V5z" fill="#93cf7d" stroke="#557d4a" stroke-width=".6"/><path d="M15 13l-4-2.500V12H5v2h6v1.500z" fill="#d5392a" stroke="#963024" stroke-width=".6"/><path d="M1 10.500h4.500V15H1z" fill="#efb81c" stroke="#97731c" stroke-width=".6"/><text x="6" y="7" font-size="7" font-weight="bold" fill="#666">+Y</text></svg></button>
        <button aria-label="View -Y"><svg viewBox="0 0 16 16"><path d="M10 5l2.500-4L15 5h-1v6h-3V5z" fill="#93cf7d" stroke="#557d4a" stroke-width=".6"/><path d="M1 13l4-2.500V12h6v2H5v1.500z" fill="#d5392a" stroke="#963024" stroke-width=".6"/><path d="M10.500 10.500H15V15h-4.500z" fill="#efb81c" stroke="#97731c" stroke-width=".6"/><text x="1" y="7" font-size="7" font-weight="bold" fill="#666">-Y</text></svg></button>
        <button aria-label="View +Z"><svg viewBox="0 0 16 16"><path d="M10 5l2.500-4L15 5h-1v6h-3V5z" fill="#e9b41c" stroke="#97731c" stroke-width=".6"/><path d="M1 13l4-2.500V12h6v2H5v1.500z" fill="#d5392a" stroke="#963024" stroke-width=".6"/><path d="M10.500 10.500H15V15h-4.500z" fill="#93cf7d" stroke="#557d4a" stroke-width=".6"/><text x="0" y="7" font-size="7" font-weight="bold" fill="#666">+Z</text></svg></button>
        <button aria-label="View -Z"><svg viewBox="0 0 16 16"><path d="M1 5l2.500-4L6 5H5v6H2V5z" fill="#e9b41c" stroke="#97731c" stroke-width=".6"/><path d="M15 13l-4-2.500V12H5v2h6v1.500z" fill="#d5392a" stroke="#963024" stroke-width=".6"/><path d="M1 10.500h4.500V15H1z" fill="#93cf7d" stroke="#557d4a" stroke-width=".6"/><text x="7" y="7" font-size="7" font-weight="bold" fill="#666">-Z</text></svg></button>
        <button aria-label="Isometric view"><svg><use href="#iso"/></svg></button>
        <button aria-label="Rotate +90"><svg><use href="#rotp"/></svg></button>
        <button aria-label="Rotate -90"><svg><use href="#rotm"/></svg></button>
      </div>
      <svg class="mr-[3px] ml-[5px] h-[15px] w-[4px]"><use href="#grip"/></svg>
      <button aria-label="Show orientation axes" class="rounded-xs border border-[#b4b4b4] bg-[#d6d6d6]"><svg><use href="#showaxes"/></svg></button>
      <button aria-label="Show center"><svg><use href="#center"/></svg></button>
      <button aria-label="Reset center"><svg><use href="#centeroff"/></svg></button>
      <button aria-label="Pick center"><svg><use href="#pick"/></svg></button>
      <svg class="mr-[2px] ml-[6px] h-[15px] w-[4px]"><use href="#grip"/></svg>
      <button aria-label="Light" class="rounded-xs border border-[#b4b4b4] bg-[#d6d6d6]"><svg><use href="#bulb"/></svg></button>
      <svg class="ml-[5px] h-[15px] w-[4px]"><use href="#grip"/></svg>
    </div>

    <div class="flex h-[25px] shrink-0 items-center border-b border-[#c6c6c6] bg-linear-to-b from-[#fbfbfb] to-[#ededed] pl-[186px] [&>button]:flex [&>button]:w-[21px] [&>button]:justify-center [&_button>svg]:size-[15px]">
      <button aria-label="Stream tracer"><svg><use href="#tube"/></svg></button>
      <button aria-label="Group datasets"><svg><use href="#glyphs"/></svg></button>
      <button aria-label="Extract level"><svg><use href="#glyphs2"/></svg></button>
      <svg class="mr-[4px] ml-[6px] h-[15px] w-[4px]"><use href="#grip"/></svg>
      <div class="flex w-[171px] justify-between">
        <button aria-label="Probe"><svg><use href="#plotpt"/></svg></button>
        <button aria-label="Extract selection"><svg><use href="#plotsel"/></svg></button>
        <button aria-label="Histogram"><svg><use href="#hist"/></svg></button>
        <button aria-label="Plot data over time"><svg><use href="#plottime"/></svg></button>
        <button aria-label="Plot over line"><svg><use href="#slice"/></svg></button>
        <button aria-label="Plot selection over time"><svg><use href="#plottime2"/></svg></button>
        <button aria-label="Glyph"><svg><use href="#cubestar"/></svg></button>
        <button class="text-[11px] text-[#999]">{...}</button>
      </div>
      <svg class="mr-[2px] ml-[7px] h-[15px] w-[4px]"><use href="#grip"/></svg>
      <button aria-label="Ruler"><svg><use href="#ruler"/></svg></button>
    </div>

    <main class="flex min-h-0 flex-1">
      <!-- left docks -->
      <aside class="flex w-[202px] shrink-0 flex-col pr-[5px]">
        <div class="flex min-h-0 flex-1 flex-col">
          <div class="flex h-[14px] items-center justify-end"><svg class="size-[8px]"><use href="#close"/></svg></div>
          <div class="flex-1 border border-[#b8b8b8] bg-white"></div>
        </div>
        <div class="mx-auto mt-[1px] mb-[3px] h-px w-[12px] border-t border-dotted border-[#aaa]"></div>
        <div class="flex h-[14px] items-end border-b border-[#c6c6c6]">
          <button class="h-[14px] w-[52px] rounded-t-xs border border-b-0 border-[#bbb] bg-[#f6f6f6]">Properties</button>
          <button class="h-[13px] w-[56px] border border-b-0 border-l-0 border-[#bbb] bg-[#dcdcdc]">Information</button>
        </div>
        <div class="flex h-[15px] items-center gap-[2px] pr-px pl-[2px]"><span class="flex-1">Properties</span><svg class="size-[8px]"><use href="#float"/></svg><svg class="size-[8px]"><use href="#close"/></svg></div>
        <div class="mt-[5px] flex h-[16px] gap-[2px] pr-[6px] pl-[6px] text-[#bbb] [&>button]:flex [&>button]:flex-1 [&>button]:items-center [&>button]:justify-center [&>button]:gap-[2px] [&>button]:rounded-xs [&>button]:border [&>button]:border-[#c8c8c8] [&>button]:bg-linear-to-b [&>button]:from-white [&>button]:to-[#f0f0f0] [&_svg]:size-[10px]">
          <button disabled><svg><use href="#apply"/></svg>Apply</button>
          <button disabled><svg><use href="#noentry"/></svg>Reset</button>
          <button disabled><svg><use href="#cross"/></svg>Delete</button>
          <button disabled class="w-[21px] flex-none! text-[12px]">?</button>
        </div>
        <div class="mt-[3px] flex gap-[2px] px-[6px]">
          <input aria-label="Search" placeholder="Search ... (use Esc to clear text)" class="h-[15px] min-w-0 flex-1 rounded-xs border border-[#aaa] bg-white px-px placeholder:text-[#888]">
          <button aria-label="Advanced" class="flex h-[15px] w-[16px] items-center justify-center rounded-xs border border-[#bbb] bg-[#f4f4f4] text-[#aaa]"><svg class="size-[11px]"><use href="#gear"/></svg></button>
        </div>
        <div class="mt-[5px] ml-[6px] flex h-[193px] overflow-hidden pr-[6px]">
          <div class="flex min-w-0 flex-1 flex-col [&>*]:shrink-0 [&_section]:mb-[8px] [&_section]:flex [&_section]:h-[17px] [&_section]:justify-between [&_section>button]:flex [&_section>button]:w-[18px] [&_section>button]:items-center [&_section>button]:justify-center [&_section>button]:rounded-xs [&_section>button]:border [&_section>button]:border-[#c4c4c4] [&_section>button]:bg-[#f6f6f6] [&_section>button>svg]:size-[10px] [&_h2]:flex [&_h2]:w-[91px] [&_h2]:items-center [&_h2]:gap-[5px] [&_h2]:border [&_h2]:border-[#c4c4c4] [&_h2]:pl-[6px] [&_h2]:font-['Roboto',sans-serif] [&_h2]:font-bold [&_h2]:whitespace-nowrap">
            <section class="text-[#aaa]"><h2 class="text-[#111]"><svg class="size-[9px] shrink-0"><use href="#dash"/></svg>Properties</h2>
              <button aria-label="Copy"><svg><use href="#copy"/></svg></button><button aria-label="Paste"><svg><use href="#paste"/></svg></button><button aria-label="Restore"><svg><use href="#refresh"/></svg></button><button aria-label="Save"><svg><use href="#disk"/></svg></button></section>
            <section class="text-[#aaa]"><h2 class="text-[#111]"><svg class="size-[9px] shrink-0"><use href="#dash"/></svg>Display</h2>
              <button aria-label="Copy"><svg><use href="#copy"/></svg></button><button aria-label="Paste"><svg><use href="#paste"/></svg></button><button aria-label="Restore"><svg><use href="#refresh"/></svg></button><button aria-label="Save"><svg><use href="#disk"/></svg></button></section>
            <section class="text-[#3a6db0]"><h2 class="text-[#111]"><svg class="size-[9px] shrink-0"><use href="#dash"/></svg>View (Render View</h2>
              <button aria-label="Copy"><svg><use href="#copy"/></svg></button><button aria-label="Paste"><svg><use href="#paste"/></svg></button><button aria-label="Restore" class="text-[#3a86a8]"><svg><use href="#refresh"/></svg></button><button aria-label="Save"><svg><use href="#disk"/></svg></button></section>
            <div class="-mt-[3px] flex h-[13px] items-center">
              <label class="flex w-[53px] items-center gap-[3px]"><input type="checkbox" class="size-[9px] appearance-none border border-[#bbb] bg-white">Axes Grid</label>
              <button class="h-[13px] flex-1 rounded-xs border border-[#bbb] bg-linear-to-b from-white to-[#ededed] leading-[10px]">Edit</button>
            </div>
            <label class="mt-[3px] flex h-[10px] items-center gap-[3px]"><input type="checkbox" class="size-[9px] appearance-none border border-[#bbb] bg-white">Center Axes Visibility</label>
            <h3 class="mt-[5px] border-b border-[#aaa] font-['Roboto',sans-serif] font-bold">Orientation Axes</h3>
            <div class="relative mt-[4px] border-b border-[#bbb] pb-[4px]">
              <label class="flex h-[10px] items-center gap-[3px]"><input type="checkbox" checked class="size-[9px] appearance-none border border-[#bbb] bg-white">Orientation Axes Visibility</label>
              <svg class="pointer-events-none absolute top-0 left-0 size-[9px]"><use href="#check"/></svg>
            </div>
            <label class="mt-[8px] flex h-[10px] items-center gap-[3px]"><input type="checkbox" class="size-[9px] appearance-none border border-[#bbb] bg-white">Hidden Line Removal</label>
            <label class="mt-[5px] flex h-[10px] items-center gap-[3px]"><input type="checkbox" class="size-[9px] appearance-none border border-[#bbb] bg-white">Camera Parallel Projection</label>
            <h3 class="mt-[4px] border-b border-[#bbb] font-['Roboto',sans-serif] font-bold">Background</h3>
            <div class="relative mt-[3px]">
              <label class="flex h-[10px] items-center gap-[3px]"><input type="checkbox" checked class="size-[9px] appearance-none border border-[#bbb] bg-white">Use Color Palette For Background</label>
              <svg class="pointer-events-none absolute top-0 left-0 size-[9px]"><use href="#check"/></svg>
            </div>
          </div>
          <div class="flex w-[9px] flex-col items-center border-l border-[#c4c4c4] bg-[#e2e2e2]">
            <svg class="h-[9px] w-[8px] bg-[#f4f4f4] p-px"><use href="#up"/></svg>
            <div class="h-[124px] w-full border-y border-[#c4c4c4] bg-[#fafafa]"></div>
            <svg class="mt-auto h-[9px] w-[8px] bg-[#f4f4f4] p-px"><use href="#down"/></svg>
          </div>
        </div>
        <div class="h-[5px]"></div>
      </aside>

      <!-- render view -->
      <section class="flex min-w-0 flex-1 flex-col">
        <div class="flex h-[18px] shrink-0 items-end border-b border-[#c6c6c6]">
          <button class="-mb-px flex h-[17px] w-[74px] items-center gap-[3px] rounded-t-xs border border-b-0 border-[#bbb] bg-[#fafafa] pl-[6px] whitespace-nowrap"><svg class="h-[11px] w-[11px] shrink-0"><use href="#win"/></svg>Layout #1<svg class="size-[8px] shrink-0"><use href="#close"/></svg></button>
          <button class="h-[15px] w-[21px] border border-b-0 border-l-0 border-[#bbb] bg-[#dedede] font-bold">+</button>
        </div>
        <div class="flex h-[20px] shrink-0 items-center border-x border-[#c6c6c6] bg-[#f3f3f3] [&_button]:flex [&_button]:w-[17px] [&_button]:justify-center [&_button>svg]:size-[12px]">
          <button aria-label="Camera undo"><svg><use href="#camgrey"/></svg></button>
          <button aria-label="Camera redo"><svg><use href="#camgrey2"/></svg></button>
          <span class="mx-[2px] h-[13px] w-px bg-[#ddd]"></span>
          <button aria-label="Capture"><svg><use href="#shot"/></svg></button>
          <span class="mx-[2px] h-[13px] w-px bg-[#ddd]"></span>
          <button class="font-bold text-[#666]">3D</button>
          <button aria-label="Adjust camera"><svg><use href="#camfind"/></svg></button>
          <span class="mx-[2px] h-[13px] w-px bg-[#ddd]"></span>
          <button aria-label="Add selection"><svg><use href="#selplus"/></svg></button>
          <button aria-label="Subtract selection"><svg><use href="#selminus"/></svg></button>
          <button aria-label="Toggle selection"><svg><use href="#seltog"/></svg></button>
          <span class="mx-px h-[13px] w-px bg-[#ddd]"></span>
          <div class="flex w-[277px] items-center justify-between">
            <button aria-label="Select cells on"><svg><use href="#seltri"/></svg></button>
            <button aria-label="Select points on"><svg><use href="#selpts"/></svg></button>
            <button aria-label="Select cells through"><svg><use href="#selblock"/></svg></button>
            <button aria-label="Select points through"><svg><use href="#selfrus"/></svg></button>
            <button aria-label="Select cells polygon"><svg><use href="#selpoly"/></svg></button>
            <button aria-label="Select points polygon"><svg><use href="#selpolypts"/></svg></button>
            <button aria-label="Interactive select"><svg><use href="#selinter"/></svg></button>
            <button aria-label="Select block"><svg><use href="#greycube"/></svg></button>
            <button aria-label="Hover"><svg><use href="#hoverpt"/></svg></button>
            <button aria-label="Interactive cells"><svg><use href="#hovertri"/></svg></button>
            <button aria-label="Interactive points"><svg><use href="#hoverpts"/></svg></button>
            <button aria-label="Query cells"><svg><use href="#asktri"/></svg></button>
            <button aria-label="Query points"><svg><use href="#askpt"/></svg></button>
            <button aria-label="Grow selection"><svg><use href="#gplus"/></svg></button>
            <button aria-label="Shrink selection"><svg><use href="#gminus"/></svg></button>
            <button aria-label="Clear selection"><svg><use href="#trash"/></svg></button>
          </div>
          <span class="mr-[6px] ml-auto font-['Roboto',sans-serif] font-bold underline">RenderView1</span>
          <div class="flex gap-[1px] [&>button]:h-[17px] [&>button]:items-center [&>button]:rounded-xs [&>button]:border [&>button]:border-[#c4c4c4] [&>button]:bg-[#fafafa]">
            <button aria-label="Split horizontal"><svg viewBox="0 0 16 16"><path d="M2 2h12v12H2zM8 2v12" fill="#cfd6ea" stroke="#8890aa"/></svg></button>
            <button aria-label="Split vertical"><svg viewBox="0 0 16 16"><path d="M2 2h12v12H2zM2 8h12" fill="#cfd6ea" stroke="#8890aa"/></svg></button>
            <button aria-label="Maximize"><svg><use href="#win"/></svg></button>
            <button aria-label="Close view"><svg class="size-[9px]!"><use href="#close"/></svg></button>
          </div>
        </div>
        <div class="relative min-h-0 flex-1 border-2 border-[#1414e8] bg-[#52576e] inset-ring inset-ring-[#8b8fb0]">
          <svg class="absolute bottom-[46px] left-[47px] h-[38px] w-[42px] text-[8px]" viewBox="0 0 42 38">
            <path d="M6 32V8" stroke="#b8b020"/><path d="M3.500 8L6 3l2.500 5z" fill="#e8e000"/>
            <path d="M6 31h25" stroke="#b02030"/><path d="M29 28.500l6 2.500-6 2.500z" fill="#e00000"/>
            <circle cx="6" cy="31" r="3" fill="#066010"/>
            <g fill="#fff"><text x="7" y="8">Y</text><text x="8" y="31">Z</text><text x="30" y="31">X</text></g>
          </svg>
        </div>
      </section>

      <!-- Find Data dock -->
      <aside class="flex w-[261px] shrink-0 flex-col pl-[5px]">
        <div class="flex h-[15px] items-center gap-[1px] pl-[4px]"><span class="flex-1">Find Data</span><svg class="size-[8px]"><use href="#float"/></svg><svg class="-mr-[3px] size-[8px]"><use href="#close"/></svg></div>
        <div class="mt-[3px] flex h-[423px] overflow-hidden pl-[7px]">
          <div class="flex min-w-0 flex-1 flex-col pt-px [&_h2]:flex [&_h2]:h-[18px] [&_h2]:shrink-0 [&_h2]:items-center [&_h2]:gap-[5px] [&_h2]:border [&_h2]:border-[#c4c4c4] [&_h2]:px-[6px] [&_h2]:font-['Roboto',sans-serif] [&_h2]:font-bold [&_h3]:h-[11px] [&_h3]:shrink-0 [&_h3]:border-b [&_h3]:border-[#bbb] [&_h3]:leading-[9px]">
            <h2><svg class="size-[9px]"><use href="#dash"/></svg>Create Selection</h2>
            <h3 class="mt-[3px] font-['Roboto',sans-serif] font-bold">Selection Criteria</h3>
            <div class="mt-[3px] flex h-[15px] shrink-0 items-center">
              <label for="producer" class="w-[53px] whitespace-nowrap">Data Producer</label>
              <div class="relative h-full flex-1"><select id="producer" class="h-full w-full appearance-none rounded-xs border border-[#bbb] bg-linear-to-b from-white to-[#f0f0f0] px-[3px]"><option>(none)</option></select><svg class="absolute top-[4px] right-[4px] size-[7px]"><use href="#down"/></svg></div>
            </div>
            <div class="mt-[3px] flex h-[15px] shrink-0 items-center">
              <label for="etype" class="w-[53px] whitespace-nowrap">Element Type</label>
              <div class="relative h-full flex-1 text-[#c0c0c0]"><select id="etype" disabled class="h-full w-full appearance-none rounded-xs border border-[#ccc] px-[6px] opacity-100"><option>•&nbsp; Point</option></select><svg class="absolute top-[4px] right-[4px] size-[7px]"><use href="#down"/></svg></div>
            </div>
            <div class="mt-[4px] flex h-[15px] shrink-0 items-center gap-[3px] text-[#c0c0c0]">
              <div class="relative h-[14px] w-[43px]"><select aria-label="Field" disabled class="h-full w-full appearance-none rounded-xs border border-[#ccc] opacity-100"></select><svg class="absolute top-[4px] right-[4px] size-[6px]"><use href="#down"/></svg></div>
              <div class="relative h-[14px] w-[59px]"><select aria-label="Operator" disabled class="h-full w-full appearance-none rounded-xs border border-[#ccc] px-[3px] opacity-100"><option>is</option></select><svg class="absolute top-[4px] right-[4px] size-[6px]"><use href="#down"/></svg></div>
              <input aria-label="Value" placeholder="value" class="h-[14px] min-w-0 flex-1 rounded-xs border border-[#aaa] bg-white px-px placeholder:text-[#888]">
              <button aria-label="Add" class="flex h-[15px] w-[18px] items-center justify-center rounded-xs border border-[#bbb] bg-[#fafafa]"><svg class="size-[10px]"><use href="#bplus"/></svg></button>
              <button aria-label="Remove" class="flex h-[15px] w-[18px] items-center justify-center rounded-xs border border-[#ccc] bg-[#f4f4f4]"><svg class="size-[10px]"><use href="#gminus"/></svg></button>
            </div>
            <h3 class="mt-[4px] font-['Roboto',sans-serif] font-bold">Selection Qualifiers</h3>
            <div class="mt-[3px] flex h-[15px] shrink-0 items-center">
              <label for="pid" class="w-[53px]">Process ID</label>
              <input id="pid" disabled value="-1" class="h-[14px] min-w-0 flex-1 rounded-xs border border-[#bbb] bg-[#ececec] px-[2px] text-[#c0c0c0]">
            </div>
            <div class="mt-[3px] flex h-[16px] shrink-0 gap-[2px] text-[#bbb] [&>button]:flex [&>button]:flex-1 [&>button]:items-center [&>button]:justify-center [&>button]:gap-[2px] [&>button]:rounded-xs [&>button]:border [&>button]:border-[#ccc] [&>button]:bg-[#f4f4f4] [&_svg]:size-[10px]">
              <button disabled><svg><use href="#apply"/></svg>Find Data</button>
              <button disabled><svg><use href="#noentry"/></svg>Reset</button>
              <button disabled><svg class="text-[#999]"><use href="#refresh"/></svg>Clear</button>
            </div>
            <h2 class="mt-[2px]"><svg class="size-[9px]"><use href="#dash"/></svg>Selected Data (none)</h2>
            <div class="mt-[2px] flex h-[15px] shrink-0 items-center">
              <label for="attr" class="w-[34px] font-['Roboto',sans-serif] font-bold">Attribute:</label>
              <div class="relative h-[15px] flex-1"><select id="attr" class="h-full w-full appearance-none rounded-xs border border-[#bbb] bg-linear-to-b from-white to-[#f0f0f0]"></select><svg class="absolute top-[4px] right-[4px] size-[7px]"><use href="#down"/></svg></div>
              <button aria-label="Columns" class="mx-[3px] flex h-[15px] w-[16px] items-center justify-center rounded-xs border border-[#bbb] bg-[#fafafa]"><svg class="size-[12px]" viewBox="0 0 12 12"><path d="M1 1h9v9H1z" fill="#f3dc5a" stroke="#cda41c"/><path d="M4 1v9M7 1v9M1 4h9M1 7h9" stroke="#cda41c" stroke-width=".7"/><path d="M9 9h3l-1.500 2z" fill="#333"/></svg></button>
              <label class="mr-[4px] flex items-center gap-[3px] whitespace-nowrap text-[#c0c0c0]"><input type="checkbox" disabled class="size-[10px] appearance-none border border-[#bbb]">Invert selection</label>
            </div>
            <div class="mt-[3px] h-[128px] shrink-0 border border-[#c4c4c4] bg-white"></div>
            <div class="mt-[2px] flex h-[14px] shrink-0 gap-[2px] text-[#bbb] [&>button]:flex-1 [&>button]:rounded-xs [&>button]:border [&>button]:border-[#ccc] [&>button]:bg-[#f4f4f4]">
              <button disabled>Freeze</button>
              <button disabled>Extract</button>
              <button disabled>Plot Over Time</button>
            </div>
            <h2 class="mt-[2px]"><svg class="size-[9px]"><use href="#dash"/></svg>Selection Display</h2>
            <h3 class="mt-px text-[#bbb]">Selection Labels</h3>
            <div class="mt-[4px] flex h-[16px] shrink-0 gap-[2px] text-[#bbb] [&>button]:flex [&>button]:flex-1 [&>button]:items-center [&>button]:rounded-xs [&>button]:border [&>button]:border-[#ccc] [&>button]:bg-[#f4f4f4] [&>button]:px-[2px]">
              <button disabled><span class="flex flex-1 items-center justify-center gap-[2px]"><svg class="size-[10px]"><use href="#greycube"/></svg>Cell Labels</span><svg class="size-[5px]"><use href="#down"/></svg></button>
              <button disabled><span class="flex-1">•&nbsp; Point Labels</span><svg class="size-[5px]"><use href="#down"/></svg></button>
            </div>
            <button disabled class="mt-[2px] flex h-[16px] shrink-0 items-center justify-center gap-[2px] rounded-xs border border-[#ccc] bg-[#f4f4f4] text-[#bbb]"><svg class="size-[10px]"><use href="#gear"/></svg>Edit Label Properties</button>
            <h3 class="mt-[1px] text-[#bbb]">Selection Appearance</h3>
            <button disabled class="mt-[4px] flex h-[16px] shrink-0 items-center gap-[2px] rounded-xs border border-[#ccc] bg-[#f8f8f8] pl-px text-[#bbb]"><span class="size-[10px] rounded-full bg-[#5a5a5a]"></span>Selection Color</button>
          </div>
          <div class="flex w-[10px] flex-col items-center border-l border-[#c4c4c4] bg-[#e2e2e2]">
            <svg class="h-[9px] w-[8px] bg-[#f4f4f4] p-px"><use href="#up"/></svg>
            <div class="h-[350px] w-full border-y border-[#c4c4c4] bg-[#fafafa]"></div>
            <svg class="mt-auto h-[9px] w-[8px] bg-[#f4f4f4] p-px"><use href="#down"/></svg>
          </div>
        </div>
        <div class="mt-auto flex h-[15px] items-start border-t border-[#c6c6c6]">
          <button class="h-[13px] w-[75px] border border-t-0 border-[#bbb] bg-[#dcdcdc]">Color Map Editor</button>
          <button class="-mt-px h-[15px] w-[49px] rounded-b-xs border border-t-0 border-l-0 border-[#bbb] bg-[#f8f8f8]">Find Data</button>
        </div>
      </aside>
    </main>

    <!-- status bar -->
    <footer class="flex h-[21px] shrink-0 flex-col bg-white">
      <div class="flex h-[19px] items-center border-b border-[#444] bg-[#efefef]">
        <span class="w-[424px] pl-[4px]">Open</span>
        <button aria-label="Abort" class="flex h-[13px] w-[13px] items-center justify-center rounded-xs border border-[#c4c4c4] bg-[#f8f8f8]"><svg class="size-[6px]"><use href="#cross"/></svg></button>
        <div class="ml-[1px] h-[13px] flex-1 border border-[#c8c8c8] bg-[#e6e6e6]"></div>
        <div class="relative ml-[4px] flex h-[14px] w-[418px] items-center border border-r-0 border-[#c4c4c4] bg-white">
          <div class="h-full w-[45px] border-r border-[#8fc08f] bg-linear-to-b from-[#c4ecc4] to-[#98dc9c]"></div>
          <span class="absolute inset-0 flex items-center justify-center">gpu3: 27.2 GiB/251.6 GiB 10.8%</span>
        </div>
      </div>
    </footer>
  </div>
</body>

</html>
